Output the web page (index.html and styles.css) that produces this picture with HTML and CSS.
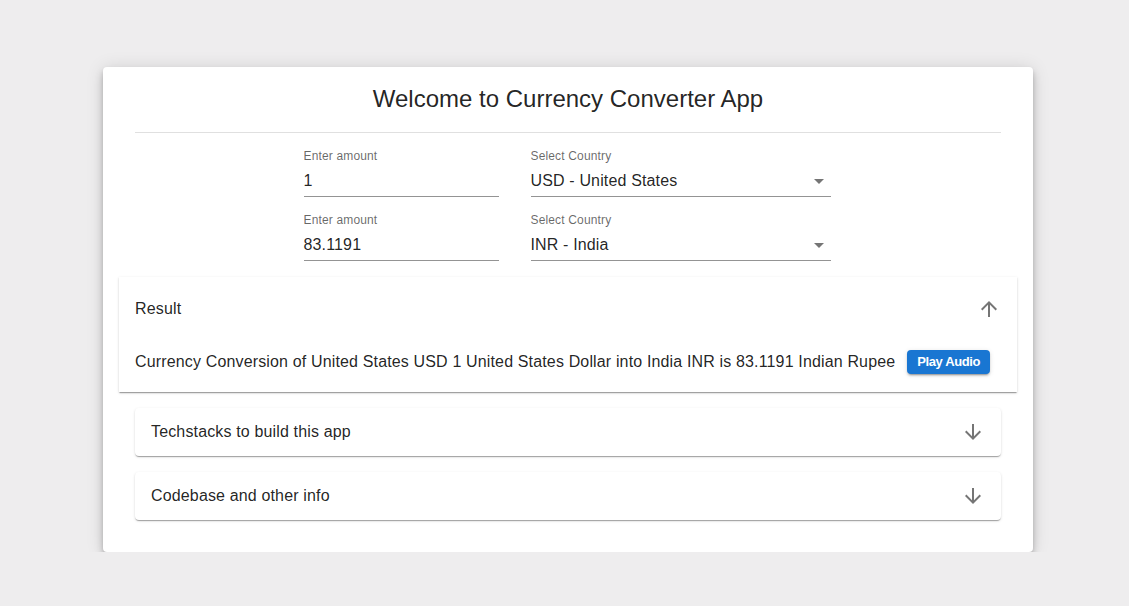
FILE: index.html
```html
<!DOCTYPE html>
<html lang="en">
<head>
<meta charset="utf-8">
<title>Currency Converter App</title>
<link rel="stylesheet" href="styles.css">
</head>
<body>
<main class="card">
  <h1 class="title">Welcome to Currency Converter App</h1>
  <hr class="divider">
  <form class="form">
    <div class="row">
      <div class="field amount">
        <label class="label">Enter amount</label>
        <div class="control"><span class="value">1</span></div>
      </div>
      <div class="field select">
        <label class="label">Select Country</label>
        <div class="control"><span class="value">USD - United States</span><span class="caret"></span></div>
      </div>
    </div>
    <div class="row">
      <div class="field amount">
        <label class="label">Enter amount</label>
        <div class="control"><span class="value">83.1191</span></div>
      </div>
      <div class="field select">
        <label class="label">Select Country</label>
        <div class="control"><span class="value">INR - India</span><span class="caret"></span></div>
      </div>
    </div>
  </form>
  <section class="panel result">
    <div class="panel-head result-head">
      <span>Result</span>
      <svg class="icon" viewBox="0 0 24 24"><path d="M4 12l1.41 1.41L11 7.83V20h2V7.83l5.58 5.59L20 12l-8-8-8 8z"/></svg>
    </div>
    <div class="result-body">
      <span>Currency Conversion of United States USD 1 United States Dollar into India INR is 83.1191 Indian Rupee</span>
      <button class="btn" type="button">Play Audio</button>
    </div>
  </section>
  <section class="panel collapsed">
    <div class="panel-head">
      <span>Techstacks to build this app</span>
      <svg class="icon" viewBox="0 0 24 24"><path d="M20 12l-1.41-1.41L13 16.17V4h-2v12.17l-5.58-5.59L4 12l8 8 8-8z"/></svg>
    </div>
  </section>
  <section class="panel collapsed">
    <div class="panel-head">
      <span>Codebase and other info</span>
      <svg class="icon" viewBox="0 0 24 24"><path d="M20 12l-1.41-1.41L13 16.17V4h-2v12.17l-5.58-5.59L4 12l8 8 8-8z"/></svg>
    </div>
  </section>
</main>
</body>
</html>
```

FILE: styles.css
```css
* { box-sizing: border-box; }
html, body { margin: 0; padding: 0; }
body {
  background: #eeedee;
  font-family: "Liberation Sans", Arial, sans-serif;
  color: rgba(0,0,0,0.87);
  padding-top: 67px;
}
.card {
  margin-left: 103px;
  width: 930px;
  background: #fff;
  border-radius: 4px;
  box-shadow: 0 3px 5px -1px rgba(0,0,0,0.2), 0 6px 10px 0 rgba(0,0,0,0.14), 0 1px 18px 0 rgba(0,0,0,0.12);
  padding: 16px 16px 32px;
  display: flex;
  flex-direction: column;
}
.title {
  margin: 0;
  font-size: 24px;
  font-weight: 400;
  line-height: 32px;
  text-align: center;
  color: rgba(0,0,0,0.87);
}
.divider {
  margin: 17px 16px 0;
  border: 0;
  border-top: 1px solid #e0e0e0;
  height: 0;
}
.form {
  display: flex;
  flex-direction: column;
  align-items: center;
  gap: 15px;
  padding-top: 15px;
  padding-right: 2px;
  margin-bottom: 16px;
}
.row {
  display: flex;
  gap: 32px;
}
.field { display: flex; flex-direction: column; }
.amount { width: 195px; }
.select { width: 300px; }
.label {
  font-size: 12px;
  line-height: 16px;
  letter-spacing: 0.15px;
  color: rgba(0,0,0,0.6);
  margin-bottom: 5px;
}
.control {
  display: flex;
  align-items: center;
  justify-content: space-between;
  font-size: 16px;
  line-height: 24px;
  letter-spacing: 0.15px;
  padding-bottom: 3px;
  border-bottom: 1px solid rgba(0,0,0,0.42);
}
.value { color: rgba(0,0,0,0.87); }
.caret {
  width: 0; height: 0;
  border-left: 5px solid transparent;
  border-right: 5px solid transparent;
  border-top: 5px solid rgba(0,0,0,0.54);
  margin-right: 7px;
}
.panel {
  background: #fff;
  border-radius: 4px;
  box-shadow: 0 2px 1px -1px rgba(0,0,0,0.2), 0 1px 1px 0 rgba(0,0,0,0.14), 0 1px 3px 0 rgba(0,0,0,0.12);
}
.panel-head {
  display: flex;
  align-items: center;
  justify-content: space-between;
  padding: 0 16px;
  height: 48px;
  font-size: 16px;
  line-height: 24px;
  letter-spacing: 0.15px;
}
.result { border-radius: 0; }
.result-head { height: 64px; }
.result-body {
  display: flex;
  align-items: center;
  gap: 12px;
  padding: 9px 16px 18px;
  font-size: 16px;
  line-height: 24px;
  letter-spacing: 0.15px;
}
.collapsed { margin: 16px 16px 0; }
.icon { width: 24px; height: 24px; fill: rgba(0,0,0,0.54); }
.btn {
  font-family: "Liberation Sans", Arial, sans-serif;
  font-size: 13px;
  font-weight: 700;
  line-height: 24px;
  letter-spacing: -0.4px;
  color: #fff;
  background: #1976d2;
  border: 0;
  border-radius: 4px;
  padding: 0 10px;
  box-shadow: 0 3px 1px -2px rgba(0,0,0,0.2), 0 2px 2px 0 rgba(0,0,0,0.14), 0 1px 5px 0 rgba(0,0,0,0.12);
}
```
